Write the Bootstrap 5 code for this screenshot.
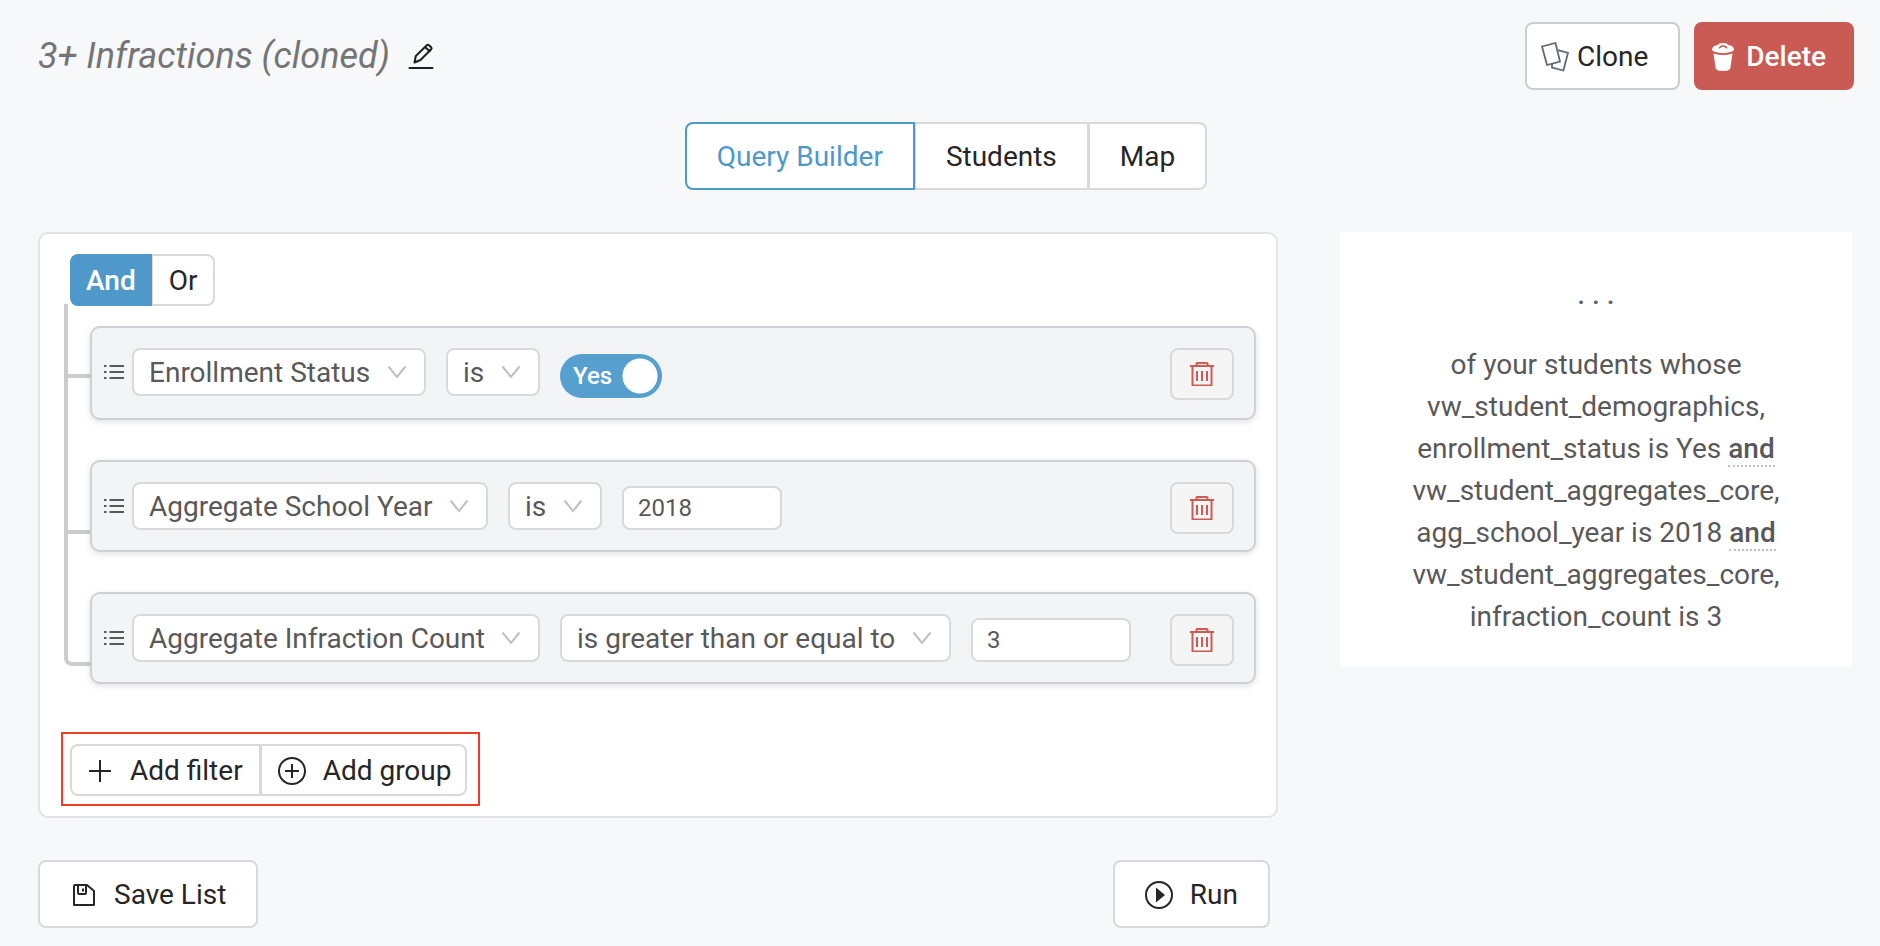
<!DOCTYPE html>
<html lang="en">
<head>
<meta charset="utf-8">
<meta name="viewport" content="width=device-width, initial-scale=1">
<title>3+ Infractions (cloned)</title>
<link href="https://cdn.jsdelivr.net/npm/bootstrap@5.3.0/dist/css/bootstrap.min.css" rel="stylesheet">
<style>
  :root { --accent: #4f98ca; --line: #d9d9d9; --ink: #262626; --body-ink: #595959; --danger: #c95a54; }
  body { background: #f7f8fa; color: var(--body-ink); font-family: Roboto, "Liberation Sans", sans-serif; font-size: 28px; line-height: 42px; }
  svg { flex: none; display: block; }
  .page-shell { padding: 22px 26px 18px 38px; }
  .title-bar { padding-top: 13px; gap: 18px; }
  .page-title { font-size: 36px; line-height: 42px; font-style: italic; font-weight: 400; color: #757575; margin: 0; }
  .icon-btn { background: none; border: 0; padding: 0; color: #1f1f1f; }
  .action-bar { gap: 14px; }

  .btn-ui { --bs-btn-font-size: 28px; --bs-btn-line-height: 42px; --bs-btn-color: var(--ink); --bs-btn-bg: #fff; --bs-btn-border-color: var(--line); --bs-btn-border-width: 2px; --bs-btn-border-radius: 8px; --bs-btn-hover-bg: #fff; --bs-btn-hover-color: var(--accent); --bs-btn-hover-border-color: var(--accent);
    --bs-btn-active-bg: #fff; --bs-btn-active-color: var(--accent); --bs-btn-active-border-color: var(--accent); display: inline-flex; align-items: center; padding: 12px 30px 10px; }
  .btn-compact { padding: 4px 16px 2px; }
  .btn-clone { --bs-btn-border-color: #ccc; padding-left: 14px; gap: 8px; }
  .btn-delete { --bs-btn-color: #fff; --bs-btn-bg: var(--danger); --bs-btn-border-color: var(--danger); --bs-btn-hover-bg: #b94c46; --bs-btn-hover-color: #fff; padding-left: 16px; padding-right: 26px; gap: 12px; font-weight: 500; }
  .btn-solid { --bs-btn-active-bg: var(--accent); --bs-btn-active-color: #fff; font-weight: 500; padding-left: 14px; padding-right: 14px; }
  .btn-group > .btn-ui { flex: none; }
  .btn-group > .btn-ui:not(:first-child) { margin-left: -2px; }

  .columns { display: grid; grid-template-columns: 155fr 64fr; gap: 0 62px; align-items: start; margin-top: 42px; padding-right: 2px; }
  .builder { background: #fff; border: 2px solid #e2e3e5; border-radius: 10px; padding: 20px 20px 10px; }
  .logic { margin-left: 10px; }
  .rules { margin: 20px 0 48px 30px; display: grid; gap: 40px; }
  .rule-item { position: relative; }
  .rule-item::before { content: ""; position: absolute; left: -26px; width: 26px; border: solid #ccc; border-width: 0 0 4px 4px; }
  .rule-item:nth-child(1)::before { top: -22px; height: 74px; }
  .rule-item:nth-child(2)::before { top: -82px; height: 156px; }
  .rule-item:nth-child(3)::before { top: -58px; height: 132px; border-bottom-left-radius: 8px; }
  .rule-box { position: relative; background: #f3f4f6; border: 2px solid #cdd1d5; border-radius: 10px; padding: 20px 20px 16px 12px; box-shadow: 0 2px 6px rgba(0,0,0,.12); }
  .rule-fields { gap: 20px; }
  .grip { height: 48px; width: 20px; margin-right: 8px; display: flex; align-items: center; }
  .pick { appearance: none; height: 48px; border: 2px solid var(--line); border-radius: 8px; color: var(--body-ink); padding: 2px 53px 0 15px; font-size: 28px; line-height: 42px;
    background: #fff url("data:image/svg+xml,%3Csvg xmlns='http://www.w3.org/2000/svg' width='20' height='14' fill='none' stroke='%23bfbfbf' stroke-width='2'%3E%3Cpath d='M1.500 1.500L10 12l8.500-10.500'/%3E%3C/svg%3E") no-repeat right 17px center; }
  .value-box { width: 160px; height: 44px; margin-top: 4px; border: 2px solid var(--line); border-radius: 8px; background: #fff; color: var(--body-ink); font-size: 24px; line-height: 36px; padding: 0 14px; }
  .yes-switch { position: relative; width: 102px; height: 44px; margin: 6px 0 4px; }
  .yes-switch input { appearance: none; display: block; width: 102px; height: 44px; margin: 0; border-radius: 22px; background: radial-gradient(circle at 80px 22px, #fff 17px, transparent 18px) #579fce; }
  .yes-switch label { position: absolute; left: 13px; top: 4px; color: #fff; font-size: 24px; line-height: 36px; font-weight: 500; }
  .btn-trash { --bs-btn-bg: #f5f5f5; --bs-btn-color: #cf5a54; padding: 12px 18px; }
  .callout-box { display: inline-flex; border: 2px solid #ee3f26; padding: 10px 11px 8px 7px; margin-left: 1px; }
  .btn-add { gap: 18px; }
  .btn-round { gap: 17px; }
  .btn-round.btn-compact { padding-right: 14px; }
  .footer-bar { margin-top: 42px; padding-right: 8px; }
  .summary { background: #fff; padding: 42px 64px 28px; }
  .summary .dots { color: #5a6570; font-weight: 500; margin-bottom: 28px; }
  .summary strong { font-weight: 500; border-bottom: 2px dotted #bfbfbf; }
</style>
</head>
<body>
<div class="page-shell">
  <header class="d-flex justify-content-between align-items-start">
    <div class="d-flex align-items-center title-bar">
      <h1 class="page-title">3+ Infractions (cloned)</h1>
      <button type="button" class="icon-btn" aria-label="Rename">
        <svg width="26" height="28" viewBox="0 0 26 28" fill="none" stroke="currentColor" stroke-width="2" stroke-linejoin="round" stroke-linecap="round"><path d="M6.500 20.500l1.300-6.500L18.800 3.300q1-1 2.200-.1l2.100 2q1 1 .1 2.100L12.500 18z M17 5l4.700 4.300"/><path d="M1.500 26h23"/></svg>
      </button>
    </div>
    <div class="d-flex action-bar">
      <button type="button" class="btn btn-ui btn-clone">
        <svg width="28" height="30" viewBox="0 0 28 30" fill="none" stroke="#5f6a72" stroke-width="1.800"><path d="M1 4.500L14.500 1l4.500 18.500L6 23z"/><path d="M17 8.200l10 2.600-4.600 17.700-11.400-3v-3.500"/></svg>
        Clone
      </button>
      <button type="button" class="btn btn-ui btn-delete">
        <svg width="22" height="30" viewBox="0 0 22 30" fill="currentColor"><path fill-rule="evenodd" d="M0 7.500Q0 4 5 3.200 7 1 11 1t6 2.200q5 .8 5 4.300 0 1.300-2.500 2.300Q11 12.500 2.500 9.800 0 8.800 0 7.500zM6.500 6.300q2.200.6 2.800-1 1.700-1 3.400 0 .6 1.600 2.800 1-1-3-4.500-3t-4.500 3z"/><path d="M1.500 11.500q9.500 3 19 0l-2.200 15Q17 29 11 29t-7.300-2.500z"/></svg>
        Delete
      </button>
    </div>
  </header>

  <nav class="d-flex justify-content-center mt-4 pt-2" aria-label="Views">
    <div class="btn-group">
      <button type="button" class="btn btn-ui active">Query Builder</button>
      <button type="button" class="btn btn-ui">Students</button>
      <button type="button" class="btn btn-ui">Map</button>
    </div>
  </nav>

  <main class="columns">
    <div>
      <section class="builder">
        <div class="btn-group logic">
          <button type="button" class="btn btn-ui btn-compact btn-solid active">And</button>
          <button type="button" class="btn btn-ui btn-compact">Or</button>
        </div>

        <ul class="rules list-unstyled">
          <li class="rule-item">
            <div class="rule-box d-flex align-items-start">
              <span class="grip"><svg width="20" height="16" viewBox="0 0 20 16" stroke="#595959" stroke-width="2"><path d="M0 2h2.500M0 8h2.500M0 14h2.500M5.500 2H20M5.500 8H20M5.500 14H20"/></svg></span>
              <div class="d-flex rule-fields flex-grow-1 align-items-start">
                <select class="pick" aria-label="Field"><option>Enrollment Status</option></select>
                <select class="pick" aria-label="Operator"><option>is</option></select>
                <div class="yes-switch"><input type="checkbox" role="switch" id="enrolled" checked><label for="enrolled">Yes</label></div>
              </div>
              <button type="button" class="btn btn-ui btn-trash" aria-label="Remove filter"><svg width="24" height="24" viewBox="0 0 24 24" fill="none" stroke="currentColor" stroke-width="2"><path d="M0 4h24M6.500 4V1.500q0-.5.500-.5h10q.5 0 .5.500V4M2.500 4v19q0 .500.500.500h18.500V4M7 9v10M12 9v10M17 9v10"/></svg></button>
            </div>
          </li>
          <li class="rule-item">
            <div class="rule-box d-flex align-items-start">
              <span class="grip"><svg width="20" height="16" viewBox="0 0 20 16" stroke="#595959" stroke-width="2"><path d="M0 2h2.500M0 8h2.500M0 14h2.500M5.500 2H20M5.500 8H20M5.500 14H20"/></svg></span>
              <div class="d-flex rule-fields flex-grow-1 align-items-start">
                <select class="pick" aria-label="Field"><option>Aggregate School Year</option></select>
                <select class="pick" aria-label="Operator"><option>is</option></select>
                <input class="value-box" type="text" value="2018" aria-label="Value">
              </div>
              <button type="button" class="btn btn-ui btn-trash" aria-label="Remove filter"><svg width="24" height="24" viewBox="0 0 24 24" fill="none" stroke="currentColor" stroke-width="2"><path d="M0 4h24M6.500 4V1.500q0-.5.500-.5h10q.5 0 .5.500V4M2.500 4v19q0 .500.500.500h18.500V4M7 9v10M12 9v10M17 9v10"/></svg></button>
            </div>
          </li>
          <li class="rule-item">
            <div class="rule-box d-flex align-items-start">
              <span class="grip"><svg width="20" height="16" viewBox="0 0 20 16" stroke="#595959" stroke-width="2"><path d="M0 2h2.500M0 8h2.500M0 14h2.500M5.500 2H20M5.500 8H20M5.500 14H20"/></svg></span>
              <div class="d-flex rule-fields flex-grow-1 align-items-start">
                <select class="pick" aria-label="Field"><option>Aggregate Infraction Count</option></select>
                <select class="pick" aria-label="Operator"><option>is greater than or equal to</option></select>
                <input class="value-box" type="text" value="3" aria-label="Value">
              </div>
              <button type="button" class="btn btn-ui btn-trash" aria-label="Remove filter"><svg width="24" height="24" viewBox="0 0 24 24" fill="none" stroke="currentColor" stroke-width="2"><path d="M0 4h24M6.500 4V1.500q0-.5.500-.5h10q.5 0 .5.500V4M2.500 4v19q0 .500.500.500h18.500V4M7 9v10M12 9v10M17 9v10"/></svg></button>
            </div>
          </li>
        </ul>

        <div class="callout-box">
          <div class="btn-group">
            <button type="button" class="btn btn-ui btn-compact btn-add"><svg width="24" height="22" viewBox="0 0 24 22" stroke="currentColor" stroke-width="2"><path d="M12 0v22M1 11h22"/></svg>Add filter</button>
            <button type="button" class="btn btn-ui btn-compact btn-round"><svg width="28" height="28" viewBox="0 0 28 28" fill="none" stroke="currentColor" stroke-width="2"><circle cx="14" cy="14" r="13"/><path d="M14 7v14M7 14h14"/></svg>Add group</button>
          </div>
        </div>
      </section>

      <div class="footer-bar d-flex justify-content-between">
        <button type="button" class="btn btn-ui btn-add"><svg width="26" height="22" viewBox="0 0 26 22" fill="none" stroke="currentColor" stroke-width="2" stroke-linejoin="round"><path d="M5 1h12l7 6v14H4V2q0-1 1-1z"/><path d="M8 1v8q0 1 1 1h6q1 0 1-1V1"/><path d="M13 4.500v3"/></svg>Save List</button>
        <button type="button" class="btn btn-ui btn-round"><svg width="28" height="28" viewBox="0 0 28 28" fill="none" stroke="currentColor" stroke-width="2"><circle cx="14" cy="14" r="13"/><path d="M11 6.500l9 7.500-9 7.500z" fill="currentColor" stroke="none"/></svg>Run</button>
      </div>
    </div>

    <aside class="summary text-center">
      <div class="dots">. . .</div>
      <p class="mb-0">of your students whose vw_student_demographics, enrollment_status is Yes <strong>and</strong> vw_student_aggregates_core, agg_school_year is 2018 <strong>and</strong> vw_student_aggregates_core, infraction_count is 3</p>
    </aside>
  </main>
</div>
<script src="https://cdn.jsdelivr.net/npm/bootstrap@5.3.0/dist/js/bootstrap.bundle.min.js"></script>
</body>
</html>
